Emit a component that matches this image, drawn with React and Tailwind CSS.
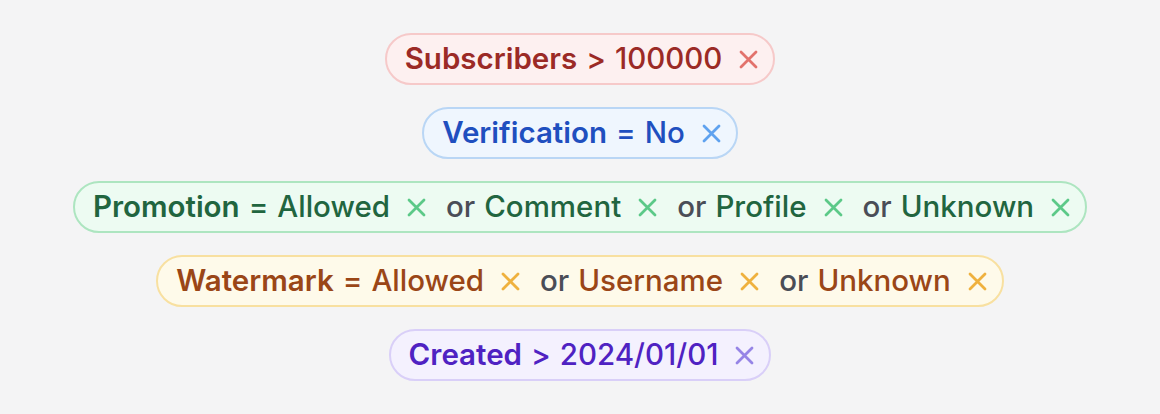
import { Fragment } from 'react';

const themes = {
    red: { pill: 'bg-[#fdf0f0] border-[#f6c9c9]', text: 'text-[#9b2a26]', x: 'text-[#e2726c]' },
    blue: { pill: 'bg-[#eff6fe] border-[#b9d6f5]', text: 'text-[#1f4fbf]', x: 'text-[#5fa2ef]' },
    green: { pill: 'bg-[#edfbf2] border-[#ade5c0]', text: 'text-[#21653f]', x: 'text-[#5cc988]' },
    amber: { pill: 'bg-[#fefaea] border-[#f8e0a0]', text: 'text-[#9a4617]', x: 'text-[#efb13e]' },
    violet: { pill: 'bg-[#f4f1fe] border-[#d9cff8]', text: 'text-[#4f22c2]', x: 'text-[#9685e6]' },
};

const filters = [
    { color: 'red', field: 'Subscribers', op: '>', values: ['100000'] },
    { color: 'blue', field: 'Verification', op: '=', values: ['No'] },
    { color: 'green', field: 'Promotion', op: '=', values: ['Allowed', 'Comment', 'Profile', 'Unknown'] },
    { color: 'amber', field: 'Watermark', op: '=', values: ['Allowed', 'Username', 'Unknown'] },
    { color: 'violet', field: 'Created', op: '>', values: ['2024/01/01'] },
];

const Cross = ({ className }) => (
    <svg width="19" height="19" viewBox="0 0 19 19" className={className} fill="none" stroke="currentColor" strokeWidth="2.8" strokeLinecap="round">
        <path d="M2 2L17 17M17 2L2 17" />
    </svg>
);

const FilterPill = ({ color, field, op, values }) => {
    const t = themes[color];
    return (
        <div className={`inline-flex h-[52px] items-center rounded-full border-2 pl-[18px] pr-[15px] text-[29.5px] leading-none ${t.pill}`}>
            <span className={`font-semibold ${t.text}`}>{field}</span>
            <span className={`ml-[9px] font-medium ${t.text}`}>{op}</span>
            {values.map((v, i) => (
                <Fragment key={v}>
                    {i > 0 && <span className="ml-[20px] font-medium text-[#4a4d57]">or</span>}
                    <span className={`ml-[9px] font-medium ${t.text}`}>{v}</span>
                    <button className={`ml-[17px] flex items-center ${t.x}`}>
                        <Cross />
                    </button>
                </Fragment>
            ))}
        </div>
    );
};

export default function App() {
    return (
        <div className="flex h-[414px] w-full flex-col items-center justify-center gap-[22px] bg-[#f4f4f5]" style={{ fontFamily: 'Inter, "Noto Sans", sans-serif' }}>
            {filters.map((f) => (
                <FilterPill key={f.field} {...f} />
            ))}
        </div>
    );
}
